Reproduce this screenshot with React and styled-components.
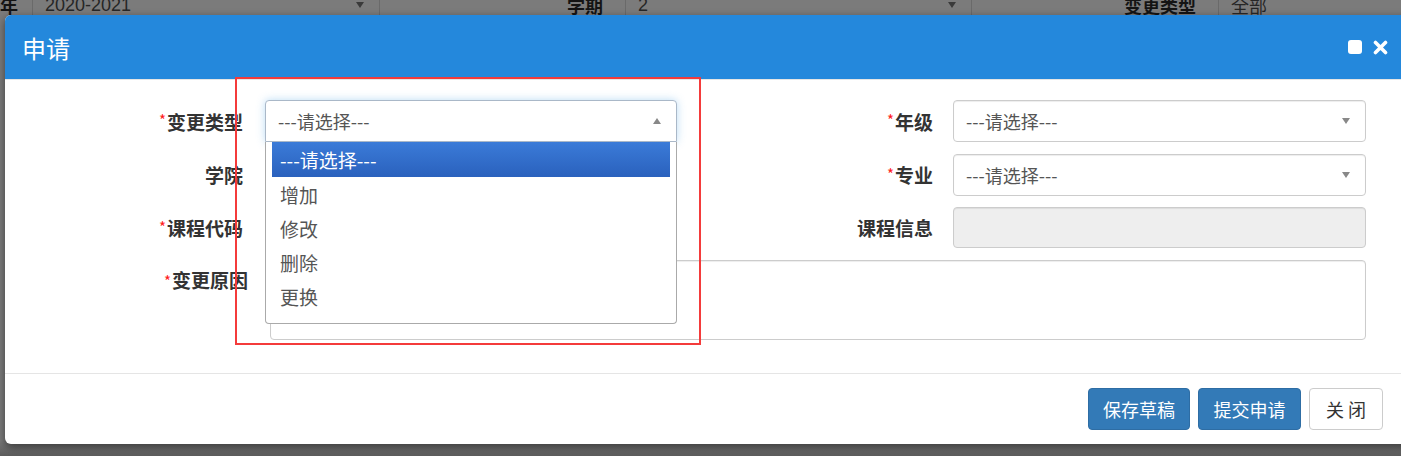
import styled, { createGlobalStyle } from "styled-components";

const GlobalStyle = createGlobalStyle`
  html, body {
    margin: 0;
    padding: 0;
    width: 1401px;
    height: 456px;
    overflow: hidden;
    background: #777777;
    font-family: "Liberation Sans", "Noto Sans CJK SC", sans-serif;
  }
`;

const Page = styled.div`
  position: relative;
  width: 1401px;
  height: 456px;
  overflow: hidden;
  background: linear-gradient(#7b7b7b 0, #7b7b7b 440px, #5c5c5c 456px);
`;

// the filter bar of the page behind the modal, dimmed by the backdrop
const FilterBar = styled.div`
  display: flex;
  align-items: center;
  height: 30px;
  margin-top: -10px;
  color: #1c1c1c;
  font-size: 18px;
`;

const FilterLabel = styled.span`
  flex-shrink: 0;
  width: ${(p) => p.width}px;
  text-align: right;
  padding-right: 22px;
  box-sizing: border-box;
  font-weight: bold;
  color: #141414;
  font-family: "Noto Sans CJK SC", sans-serif;
`;

const FilterSelect = styled.div`
  flex-shrink: 0;
  width: ${(p) => p.width}px;
  height: 30px;
  box-sizing: border-box;
  display: flex;
  align-items: center;
  justify-content: space-between;
  padding: 0 15px 0 12px;
  border-left: 1px solid #6a6a6a;
  border-right: 1px solid #6a6a6a;
  color: #262626;
`;

const Caret = styled.span`
  width: 0;
  height: 0;
  border-left: 4px solid transparent;
  border-right: 4px solid transparent;
  border-top: ${(p) => (p.up ? "0" : `6px solid ${p.color || "#888"}`)};
  border-bottom: ${(p) => (p.up ? `6px solid ${p.color || "#888"}` : "0")};
`;

const Dialog = styled.div`
  position: absolute;
  left: 5px;
  top: 15px;
  width: 1410px;
  height: 429px;
  background: #fff;
  border-radius: 6px;
  box-shadow: 0 3px 9px rgba(0, 0, 0, 0.5);
  overflow: hidden;
`;

const Header = styled.div`
  height: 65px;
  background: #2488dc;
  border-bottom: 1px solid #e5e5e5;
  box-sizing: border-box;
  display: flex;
  align-items: center;
  justify-content: space-between;
  padding: 0 27px 0 17px;
`;

const Title = styled.h4`
  margin: 0;
  color: #fff;
  font-size: 24px;
  font-weight: normal;
  font-family: "Noto Sans CJK SC", sans-serif;
`;

const HeaderTools = styled.div`
  display: flex;
  align-items: center;
  gap: 11px;
`;

const MaxIcon = styled.span`
  width: 14px;
  height: 14px;
  background: #fff;
  border-radius: 3px;
`;

const Body = styled.div`
  position: relative;
  padding: 20px 0 33px;
  border-bottom: 1px solid #e5e5e5;
`;

const Form = styled.div`
  display: grid;
  grid-template-columns: 260px 412px 276px 413px;
  grid-template-rows: 42px 42px 41px 80px;
  row-gap: 11.5px;
`;

const Label = styled.label`
  display: flex;
  align-items: center;
  justify-content: flex-end;
  padding-right: ${(p) => p.pr || 22}px;
  font-size: 19px;
  font-weight: bold;
  color: #333;
  font-family: "Noto Sans CJK SC", sans-serif;
  ${(p) => p.tall && "align-items: flex-start; padding-top: 6px;"}
`;

const Star = styled.span`
  color: #ff1a1a;
  font-size: 15px;
  font-weight: normal;
  margin-right: 1px;
  align-self: flex-start;
  margin-top: ${(p) => (p.tall ? 4 : 9)}px;
`;

const SelectBox = styled.div`
  position: relative;
  display: flex;
  align-items: center;
  justify-content: space-between;
  padding: 0 15px 0 12px;
  border: 1px solid ${(p) => (p.open ? "#aab8c8" : "#ccc")};
  border-radius: ${(p) => (p.open ? "4px 4px 0 0" : "4px")};
  box-shadow: ${(p) =>
    p.open
      ? "0 0 8px rgba(102, 175, 233, 0.45)"
      : "inset 0 1px 1px rgba(0, 0, 0, 0.075)"};
  color: #555;
  font-size: 18px;
  background: #fff;
  font-family: "Noto Sans CJK SC", sans-serif;
`;

const Input = styled.div`
  border: 1px solid #ccc;
  border-radius: 4px;
  background: ${(p) => (p.disabled ? "#eee" : "#fff")};
  box-shadow: inset 0 1px 1px rgba(0, 0, 0, 0.075);
`;

const TextArea = styled(Input)`
  grid-column: 2 / 5;
  margin-left: 5px;
`;

const Dropdown = styled.ul`
  position: absolute;
  left: -1px;
  right: -1px;
  top: 41px;
  margin: 0;
  padding: 0 6px 10px;
  list-style: none;
  background: #fff;
  border: 1px solid #aaa;
  border-top: none;
  border-radius: 0 0 4px 4px;
  z-index: 2;
`;

const Option = styled.li`
  height: ${(p) => (p.active ? 35 : 34)}px;
  display: flex;
  align-items: center;
  padding-left: 8px;
  font-size: 19px;
  color: ${(p) => (p.active ? "#fff" : "#555")};
  background: ${(p) =>
    p.active ? "linear-gradient(#3b7bd8, #2a61bd)" : "transparent"};
`;

const Marker = styled.div`
  position: absolute;
  left: 230px;
  top: -3px;
  width: 466px;
  height: 268px;
  box-sizing: border-box;
  border: 2px solid #f43b3b;
  pointer-events: none;
  z-index: 3;
`;

const Footer = styled.div`
  display: flex;
  justify-content: flex-end;
  gap: 8px;
  padding: 14px 32px 0 0;
`;

const Button = styled.button`
  width: ${(p) => p.w}px;
  height: 42px;
  padding: 0;
  font-size: 18px;
  border-radius: 4px;
  font-family: "Noto Sans CJK SC", sans-serif;
  border: 1px solid ${(p) => (p.primary ? "#2e6da4" : "#ccc")};
  background: ${(p) => (p.primary ? "#337ab7" : "#fff")};
  color: ${(p) => (p.primary ? "#fff" : "#333")};
`;

const options = ["---请选择---", "增加", "修改", "删除", "更换"];

const App = () => {
  return (
    <Page>
      <GlobalStyle />
      <FilterBar>
        <FilterLabel width={32}>年</FilterLabel>
        <FilterSelect width={348}>
          2020-2021
          <Caret color="#3a3a3a" />
        </FilterSelect>
        <FilterLabel width={245}>学期</FilterLabel>
        <FilterSelect width={347}>
          2
          <Caret color="#3a3a3a" />
        </FilterSelect>
        <FilterLabel width={246}>变更类型</FilterLabel>
        <FilterSelect width={200}>全部</FilterSelect>
      </FilterBar>

      <Dialog>
        <Header>
          <Title>申请</Title>
          <HeaderTools>
            <MaxIcon />
            <svg width="15" height="15" viewBox="0 0 15 15">
              <path
                d="M2.5 2.5 L12.5 12.5 M12.5 2.5 L2.5 12.5"
                stroke="#fff"
                strokeWidth="3.6"
                strokeLinecap="round"
              />
            </svg>
          </HeaderTools>
        </Header>

        <Body>
          <Form>
            <Label>
              <Star>*</Star>变更类型
            </Label>
            <SelectBox open>
              ---请选择---
              <Caret up />
              <Dropdown>
                {options.map((o, i) => (
                  <Option key={o} active={i === 0}>
                    {o}
                  </Option>
                ))}
              </Dropdown>
            </SelectBox>
            <Label pr={20}>
              <Star>*</Star>年级
            </Label>
            <SelectBox>
              ---请选择---
              <Caret />
            </SelectBox>

            <Label>学院</Label>
            <SelectBox>
              ---请选择---
              <Caret />
            </SelectBox>
            <Label pr={20}>
              <Star>*</Star>专业
            </Label>
            <SelectBox>
              ---请选择---
              <Caret />
            </SelectBox>

            <Label>
              <Star>*</Star>课程代码
            </Label>
            <Input />
            <Label pr={20}>课程信息</Label>
            <Input disabled />

            <Label pr={17} tall>
              <Star tall>*</Star>变更原因
            </Label>
            <TextArea />
          </Form>
          <Marker />
        </Body>

        <Footer>
          <Button primary w={102}>保存草稿</Button>
          <Button primary w={103}>提交申请</Button>
          <Button w={74}>关&nbsp;闭</Button>
        </Footer>
      </Dialog>
    </Page>
  );
};

export default App;
